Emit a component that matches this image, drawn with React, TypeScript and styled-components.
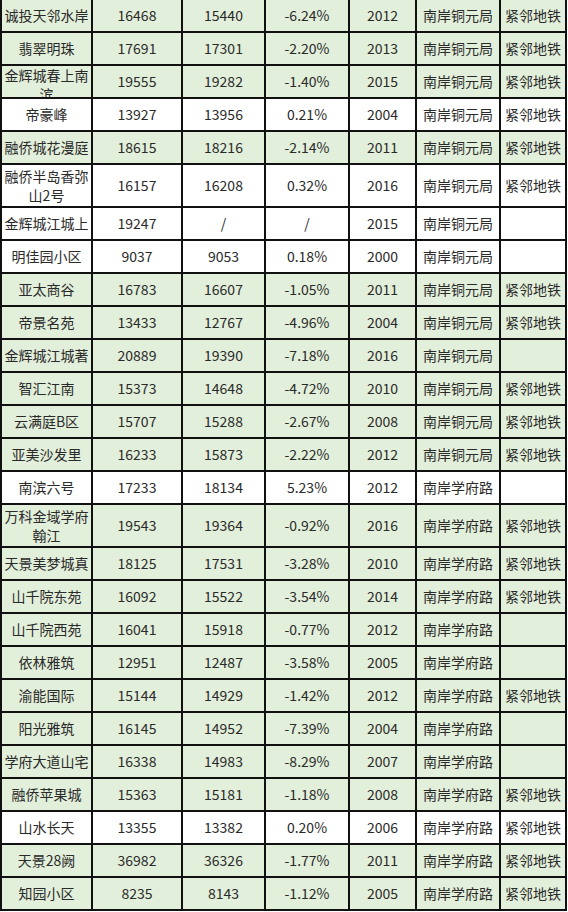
import React from "react";
import styled, { createGlobalStyle } from "styled-components";

/* data: name, price now, price before, change, year, area, metro, white row, two-line row */
type Row = [string, string, string, string, string, string, string, boolean?, boolean?];

const rows: Row[] = [
  ["诚投天邻水岸", "16468", "15440", "-6.24%", "2012", "南岸铜元局", "紧邻地铁"],
  ["翡翠明珠", "17691", "17301", "-2.20%", "2013", "南岸铜元局", "紧邻地铁"],
  ["金辉城春上南滨", "19555", "19282", "-1.40%", "2015", "南岸铜元局", "紧邻地铁"],
  ["帝豪峰", "13927", "13956", "0.21%", "2004", "南岸铜元局", "紧邻地铁", true],
  ["融侨城花漫庭", "18615", "18216", "-2.14%", "2011", "南岸铜元局", "紧邻地铁"],
  ["融侨半岛香弥山2号", "16157", "16208", "0.32%", "2016", "南岸铜元局", "紧邻地铁", true, true],
  ["金辉城江城上", "19247", "/", "/", "2015", "南岸铜元局", "", true],
  ["明佳园小区", "9037", "9053", "0.18%", "2000", "南岸铜元局", "", true],
  ["亚太商谷", "16783", "16607", "-1.05%", "2011", "南岸铜元局", "紧邻地铁"],
  ["帝景名苑", "13433", "12767", "-4.96%", "2004", "南岸铜元局", "紧邻地铁"],
  ["金辉城江城著", "20889", "19390", "-7.18%", "2016", "南岸铜元局", ""],
  ["智汇江南", "15373", "14648", "-4.72%", "2010", "南岸铜元局", "紧邻地铁"],
  ["云满庭B区", "15707", "15288", "-2.67%", "2008", "南岸铜元局", "紧邻地铁"],
  ["亚美沙发里", "16233", "15873", "-2.22%", "2012", "南岸铜元局", "紧邻地铁"],
  ["南滨六号", "17233", "18134", "5.23%", "2012", "南岸学府路", "", true],
  ["万科金域学府翰江", "19543", "19364", "-0.92%", "2016", "南岸学府路", "紧邻地铁", false, true],
  ["天景美梦城真", "18125", "17531", "-3.28%", "2010", "南岸学府路", "紧邻地铁"],
  ["山千院东苑", "16092", "15522", "-3.54%", "2014", "南岸学府路", "紧邻地铁"],
  ["山千院西苑", "16041", "15918", "-0.77%", "2012", "南岸学府路", ""],
  ["依林雅筑", "12951", "12487", "-3.58%", "2005", "南岸学府路", ""],
  ["渝能国际", "15144", "14929", "-1.42%", "2012", "南岸学府路", "紧邻地铁"],
  ["阳光雅筑", "16145", "14952", "-7.39%", "2004", "南岸学府路", ""],
  ["学府大道山宅", "16338", "14983", "-8.29%", "2007", "南岸学府路", ""],
  ["融侨苹果城", "15363", "15181", "-1.18%", "2008", "南岸学府路", "紧邻地铁"],
  ["山水长天", "13355", "13382", "0.20%", "2006", "南岸学府路", "紧邻地铁", true],
  ["天景28阙", "36982", "36326", "-1.77%", "2011", "南岸学府路", "紧邻地铁"],
  ["知园小区", "8235", "8143", "-1.12%", "2005", "南岸学府路", "紧邻地铁"],
];

const Global = createGlobalStyle`
  html, body {
    margin: 0;
    padding: 0;
    background: #fff;
    overflow: hidden;
  }
  body {
    font-family: "Noto Sans CJK SC", "Noto Sans", sans-serif;
  }
`;

const Sheet = styled.div<{ $rows: string }>`
  display: grid;
  grid-template-columns: 89px 88px 81px 82px 65px 82px 64px;
  grid-template-rows: ${(p) => p.$rows};
  gap: 2px;
  padding: 2px;
  margin-top: -2px;
  width: max-content;
  background: #111;
`;

const Cell = styled.div<{ $plain?: boolean }>`
  display: flex;
  align-items: safe center;
  justify-content: center;
  overflow: hidden;
  padding: 0 2px;
  background: ${(p) => (p.$plain ? "#ffffff" : "#e2efda")};
  color: #2a2a2a;
  font-size: 14px;
  line-height: 19px;
  text-align: center;
`;

export default function App() {
  const template = rows.map((r) => (r[8] ? "41px" : "31px")).join(" ");
  return (
    <>
      <Global />
      <Sheet $rows={template}>
        {rows.map((r, i) =>
          r.slice(0, 7).map((v, j) => (
            <Cell key={`${i}-${j}`} $plain={!!r[7]}>
              {v as string}
            </Cell>
          ))
        )}
      </Sheet>
    </>
  );
}
